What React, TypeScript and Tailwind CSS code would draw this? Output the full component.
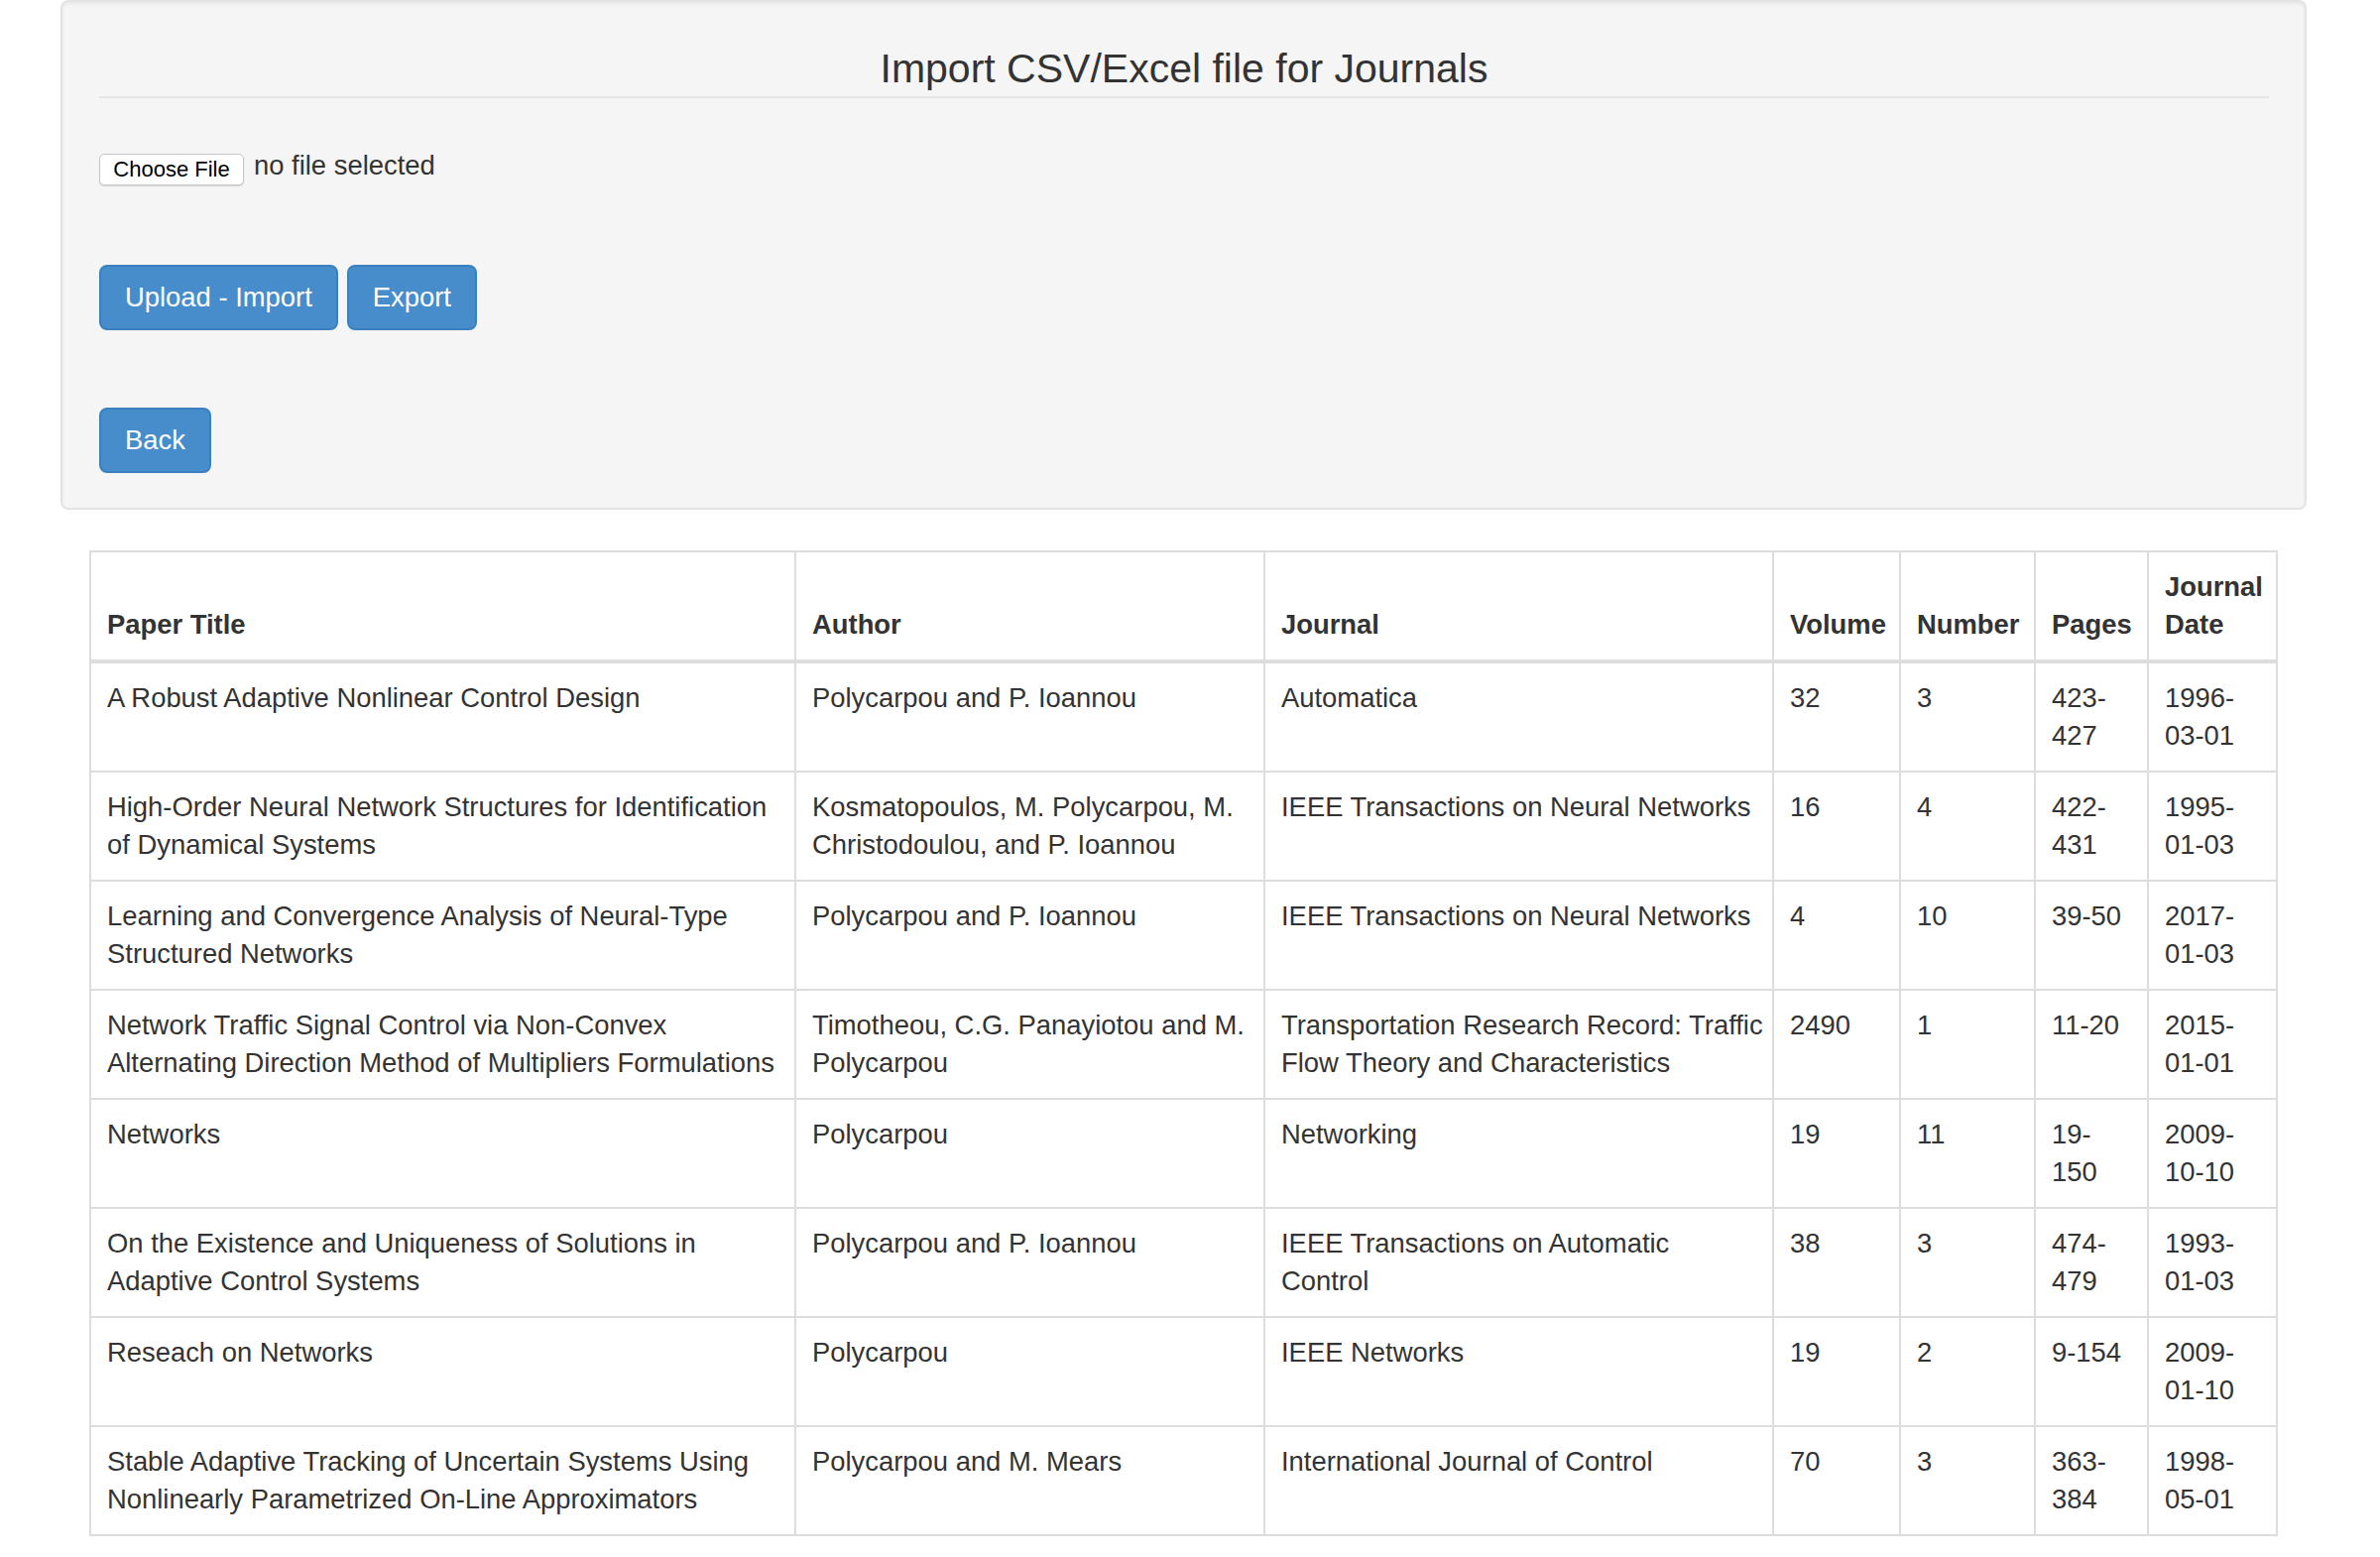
import React from "react";

type Row = string[][];

const rows: Row[] = [
  [
    ["A Robust Adaptive Nonlinear Control Design"],
    ["Polycarpou and P. Ioannou"],
    ["Automatica"],
    ["32"],
    ["3"],
    ["423-", "427"],
    ["1996-", "03-01"],
  ],
  [
    ["High-Order Neural Network Structures for Identification", "of Dynamical Systems"],
    ["Kosmatopoulos, M. Polycarpou, M.", "Christodoulou, and P. Ioannou"],
    ["IEEE Transactions on Neural Networks"],
    ["16"],
    ["4"],
    ["422-", "431"],
    ["1995-", "01-03"],
  ],
  [
    ["Learning and Convergence Analysis of Neural-Type", "Structured Networks"],
    ["Polycarpou and P. Ioannou"],
    ["IEEE Transactions on Neural Networks"],
    ["4"],
    ["10"],
    ["39-50"],
    ["2017-", "01-03"],
  ],
  [
    ["Network Traffic Signal Control via Non-Convex", "Alternating Direction Method of Multipliers Formulations"],
    ["Timotheou, C.G. Panayiotou and M.", "Polycarpou"],
    ["Transportation Research Record: Traffic", "Flow Theory and Characteristics"],
    ["2490"],
    ["1"],
    ["11-20"],
    ["2015-", "01-01"],
  ],
  [
    ["Networks"],
    ["Polycarpou"],
    ["Networking"],
    ["19"],
    ["11"],
    ["19-", "150"],
    ["2009-", "10-10"],
  ],
  [
    ["On the Existence and Uniqueness of Solutions in", "Adaptive Control Systems"],
    ["Polycarpou and P. Ioannou"],
    ["IEEE Transactions on Automatic", "Control"],
    ["38"],
    ["3"],
    ["474-", "479"],
    ["1993-", "01-03"],
  ],
  [
    ["Reseach on Networks"],
    ["Polycarpou"],
    ["IEEE Networks"],
    ["19"],
    ["2"],
    ["9-154"],
    ["2009-", "01-10"],
  ],
  [
    ["Stable Adaptive Tracking of Uncertain Systems Using", "Nonlinearly Parametrized On-Line Approximators"],
    ["Polycarpou and M. Mears"],
    ["International Journal of Control"],
    ["70"],
    ["3"],
    ["363-", "384"],
    ["1998-", "05-01"],
  ],
];

const headers: string[][] = [
  ["Paper Title"],
  ["Author"],
  ["Journal"],
  ["Volume"],
  ["Number"],
  ["Pages"],
  ["Journal", "Date"],
];

function Lines({ lines }: { lines: string[] }) {
  return (
    <>
      {lines.map((l, i) => (
        <React.Fragment key={i}>
          {i > 0 && <br />}
          <span className="whitespace-nowrap">{l}</span>
        </React.Fragment>
      ))}
    </>
  );
}

export default function App() {
  return (
    <div className="min-h-[1570px] w-full bg-white font-['Liberation_Sans',Arial,sans-serif] text-[#333333]">
      <div className="ml-[61px] w-[2265px] rounded-[8px] border-2 border-[#e3e3e3] bg-[#f5f5f5] pl-[37px] pr-[36px] pb-[35px] shadow-[inset_0_2px_3px_rgba(0,0,0,0.06)]">
        <h3 className="mt-[45px] border-b-2 border-[#e6e6e6] pb-[5px] text-center text-[41px] leading-[45px] font-normal text-[#333333]">
          Import CSV/Excel file for Journals
        </h3>

        <div className="mt-[49px] flex items-start">
          <div className="mt-[7px] flex h-[32px] w-[146px] items-center justify-center rounded-[5px] border border-[#c6c6c6] bg-white text-[22px] leading-none text-black shadow-[0_1px_1px_rgba(0,0,0,0.12)]">
            Choose File
          </div>
          <span className="ml-[10px] text-[27.4px] leading-[38px]">no file selected</span>
        </div>

        <div className="mt-[80px] flex gap-[9px]">
          <button className="rounded-[8px] border-2 border-[#3b80c0] bg-[#478dcb] px-[24px] py-[12px] text-[27.4px] leading-[38px] text-white">
            Upload - Import
          </button>
          <button className="rounded-[8px] border-2 border-[#3b80c0] bg-[#478dcb] px-[24px] py-[12px] text-[27.4px] leading-[38px] text-white">
            Export
          </button>
        </div>

        <div className="mt-[78px] flex">
          <button className="rounded-[8px] border-2 border-[#3b80c0] bg-[#478dcb] px-[24px] py-[12px] text-[27.4px] leading-[38px] text-white">
            Back
          </button>
        </div>
      </div>

      <table className="ml-[90px] mt-[41px] w-[2207px] table-fixed border-separate border-spacing-0 text-[27.4px] leading-[38px]">
        <colgroup>
          <col className="w-[713px]" />
          <col className="w-[473px]" />
          <col className="w-[513px]" />
          <col className="w-[128px]" />
          <col className="w-[136px]" />
          <col className="w-[114px]" />
          <col className="w-[130px]" />
        </colgroup>
        <thead>
          <tr>
            {headers.map((h, i) => (
              <th
                key={i}
                className={
                  "border-t-2 border-r-2 border-b-4 border-[#dddddd] px-[16px] py-[16px] h-[114px] text-left align-bottom font-bold " +
                  (i === 0 ? "border-l-2" : "")
                }
              >
                <Lines lines={h} />
              </th>
            ))}
          </tr>
        </thead>
        <tbody>
          {rows.map((r, ri) => (
            <tr key={ri}>
              {r.map((c, ci) => (
                <td
                  key={ci}
                  className={
                    "border-r-2 border-b-2 border-[#dddddd] px-[16px] py-[16px] h-[110px] align-top " +
                    (ci === 0 ? "border-l-2" : "")
                  }
                >
                  <Lines lines={c} />
                </td>
              ))}
            </tr>
          ))}
        </tbody>
      </table>
    </div>
  );
}
